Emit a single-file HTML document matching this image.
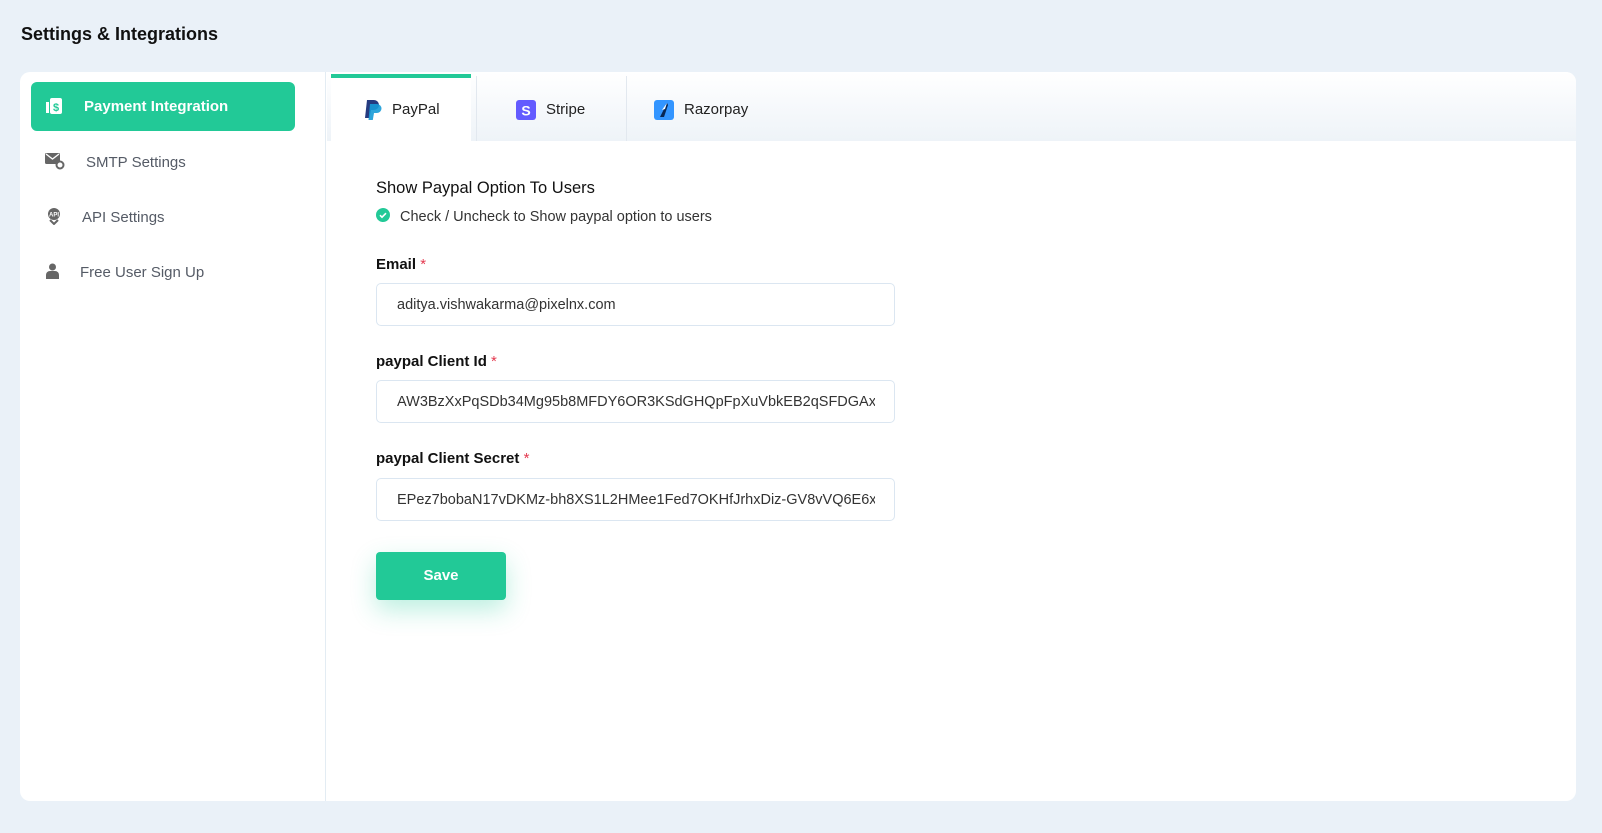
<!DOCTYPE html>
<html><head><meta charset="utf-8"><style>
*{box-sizing:border-box;margin:0;padding:0}
body{width:1602px;height:833px;background:#eaf1f8;font-family:"Liberation Sans",sans-serif;color:#1f2430;position:relative;overflow:hidden}
.abs{position:absolute}
h1{position:absolute;left:21px;top:24px;font-size:18px;font-weight:bold;color:#111}
.card{left:20px;top:72px;width:1556px;height:729px;background:#fff;border-radius:10px}
.side{left:20px;top:72px;width:306px;height:729px;border-right:1px solid #e3ecf3}
.active{left:31px;top:82px;width:264px;height:49px;background:#22c997;border-radius:6px;color:#fff;font-size:15px;font-weight:bold}
.item{font-size:15px;color:#555b66}
.tabs{left:327px;top:72px;width:1249px;height:69px;background:linear-gradient(#fff,#eef3f8);border-top-right-radius:10px}
.tab{top:2px;height:67px;font-size:15px;color:#222;display:flex;align-items:center}
.lbl{left:376px;font-size:15px;font-weight:bold;color:#111}
.lbl span{color:#e4394f;font-weight:normal}
.inp{left:376px;width:519px;height:43px;border:1px solid #dbe6f1;border-radius:5px;font-size:14.5px;color:#333;padding:13px 0 0 20px;overflow:hidden;white-space:nowrap}
.inp div{width:478px;overflow:hidden}
</style></head><body>
<h1>Settings &amp; Integrations</h1>
<div class="abs card"></div>
<div class="abs side"></div>
<div class="abs active"><svg class="abs" style="left:15px;top:15px" width="18" height="18" viewBox="0 0 18 18"><rect x="4" y="1" width="12" height="16" rx="2" fill="#fff"/><rect x="0" y="5" width="3" height="11" fill="#fff"/><text x="10" y="14" font-size="11" fill="#22c997" text-anchor="middle" font-weight="bold" font-family="Liberation Sans">$</text></svg><span class="abs" style="left:53px;top:16px">Payment Integration</span></div>
<svg class="abs" style="left:45px;top:153px" width="20" height="17" viewBox="0 0 20 17"><rect x="0" y="0" width="15" height="11" rx="1.5" fill="#666"/><path d="M1 1l6.5 5 6.5-5" stroke="#fff" fill="none" stroke-width="1.3"/><circle cx="15" cy="12" r="3.5" fill="#fff" stroke="#666" stroke-width="2"/></svg>
<div class="abs item" style="left:86px;top:154px">SMTP Settings</div>
<svg class="abs" style="left:45px;top:207px" width="18" height="18" viewBox="0 0 18 18"><circle cx="9" cy="7" r="6" fill="#666"/><text x="9" y="9.5" font-size="6" fill="#fff" text-anchor="middle" font-family="Liberation Sans" font-weight="bold">API</text><path d="M5 13l4 4 4-4" stroke="#666" stroke-width="2" fill="none"/></svg>
<div class="abs item" style="left:82px;top:209px">API Settings</div>
<svg class="abs" style="left:46px;top:263px" width="13" height="16" viewBox="0 0 13 16"><circle cx="6.5" cy="4" r="3.5" fill="#666"/><path d="M0 16v-4a4 4 0 014-4h5a4 4 0 014 4v4z" fill="#666"/></svg>
<div class="abs item" style="left:80px;top:264px">Free User Sign Up</div>
<div class="abs tabs"></div>
<div class="abs" style="left:331px;top:74px;width:140px;height:67px;background:#fff"></div>
<div class="abs" style="left:331px;top:74px;width:140px;height:4px;background:#22c997"></div>
<div class="abs" style="left:476px;top:76px;width:1px;height:65px;background:#e2e8ef"></div>
<div class="abs" style="left:626px;top:76px;width:1px;height:65px;background:#e2e8ef"></div>
<div class="abs tab" style="left:364px;top:76px"><svg width="18" height="20" viewBox="0 0 18 20"><path d="M3 0h7a5 5 0 010 10H7l-1.5 8H1z" fill="#253b80"/><path d="M6 4h7a4.5 4.5 0 010 9H10l-1.2 7H4.5z" fill="#179bd7" opacity=".9"/></svg><span style="margin-left:10px">PayPal</span></div>
<div class="abs tab" style="left:516px;top:76px"><svg width="20" height="20"><rect width="20" height="20" rx="3" fill="#635bff"/><text x="10" y="15.5" font-size="14" font-weight="bold" fill="#fff" text-anchor="middle" font-family="Liberation Sans">S</text></svg><span style="margin-left:10px">Stripe</span></div>
<div class="abs tab" style="left:654px;top:76px"><svg width="20" height="20"><rect width="20" height="20" rx="3" fill="#3395ff"/><path d="M13 3L6 17h4l4-12z" fill="#072654"/><path d="M13 3L8 10l3-1z" fill="#fff"/></svg><span style="margin-left:10px">Razorpay</span></div>
<div class="abs" style="left:376px;top:179px;font-size:16.5px;color:#111">Show Paypal Option To Users</div>
<svg class="abs" style="left:376px;top:208px" width="14" height="14"><circle cx="7" cy="7" r="7" fill="#22c997"/><path d="M4 7.2l2 2 4-4" stroke="#fff" stroke-width="1.6" fill="none"/></svg>
<div class="abs" style="left:400px;top:209px;font-size:14.5px;color:#333">Check / Uncheck to Show paypal option to users</div>
<div class="abs lbl" style="top:256px">Email <span>*</span></div>
<div class="abs inp" style="top:283px"><div>aditya.vishwakarma@pixelnx.com</div></div>
<div class="abs lbl" style="top:353px">paypal Client Id <span>*</span></div>
<div class="abs inp" style="top:380px"><div>AW3BzXxPqSDb34Mg95b8MFDY6OR3KSdGHQpFpXuVbkEB2qSFDGAx</div></div>
<div class="abs lbl" style="top:450px">paypal Client Secret <span>*</span></div>
<div class="abs inp" style="top:478px"><div>EPez7bobaN17vDKMz-bh8XS1L2HMee1Fed7OKHfJrhxDiz-GV8vVQ6E6x</div></div>
<div class="abs" style="left:376px;top:552px;width:130px;height:48px;background:#22c997;border-radius:4px;color:#fff;font-weight:bold;font-size:15px;text-align:center;line-height:48px;box-shadow:0 10px 25px rgba(34,201,151,.3)">Save</div>
</body></html>
